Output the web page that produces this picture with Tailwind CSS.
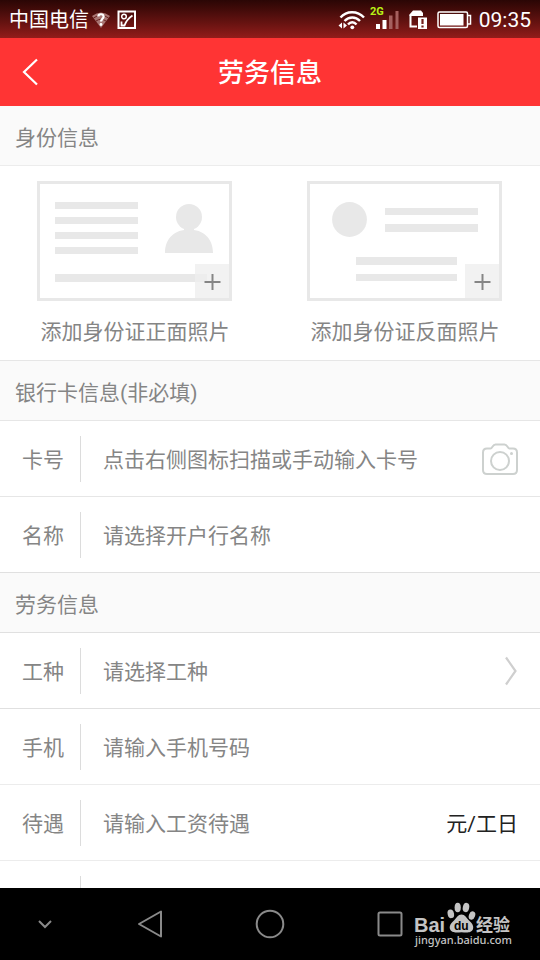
<!DOCTYPE html>
<html lang="zh-CN">
<head>
<meta charset="utf-8">
<meta name="viewport" content="width=device-width, initial-scale=1">
<title>劳务信息</title>
<script src="https://cdn.jsdelivr.net/npm/@tailwindcss/browser@4"></script>
</head>
<body class="flex h-screen flex-col overflow-hidden bg-white font-[Roboto,'Noto_Sans_CJK_SC',sans-serif] text-[21px] leading-[30px] text-[#858585]">

<!-- Status bar -->
<div class="flex h-[38px] shrink-0 items-center justify-between bg-linear-to-b from-[#2a0605] to-[#931c1a] px-[9px] pt-[2px] text-white">
  <div class="flex items-center">
    <span class="text-[20px]">中国电信</span>
    <svg class="ml-[2px]" width="20" height="18" viewBox="0 0 20 18" aria-hidden="true">
      <path d="M1 5 Q10 -2 19 5 L10 17Z" fill="#a87572"/>
      <path d="M2.500 7 Q10 1.500 17.500 7 M5 10 Q10 6.500 15 10" fill="none" stroke="#6a2220" stroke-width="1"/>
      <path d="M7.300 5.500 C7.500 2.500 12.800 2.500 12.600 5.800 C12.500 7.800 10 8 10 10.500" fill="none" stroke="#fff" stroke-width="2.200"/>
      <circle cx="10" cy="13.500" r="1.400" fill="#fff"/>
    </svg>
    <svg class="ml-[6px]" width="20" height="20" viewBox="0 0 20 20" fill="none" stroke="#fff" aria-hidden="true">
      <rect x="1.500" y="1.500" width="16.500" height="16.500" stroke-width="2"/>
      <circle cx="7" cy="6.500" r="2.300" stroke-width="1.500"/>
      <path d="M4.500 11.500 V15.500 H7.500 C9 11 11 8.500 15.500 5.500" stroke-width="1.800"/>
    </svg>
  </div>
  <div class="flex items-center">
    <svg width="28" height="22" viewBox="0 0 28 22" fill="none" stroke="#fff" stroke-width="2.400" aria-hidden="true">
      <path d="M2.500 8.500 C8.500 1.500 19.500 1.500 26 8.500 M6.500 12 C11 7.300 17.500 7.300 22 12 M10 15.500 C12.500 12.500 16 12.500 18.500 15.500"/>
      <circle cx="14.300" cy="18.300" r="1.900" fill="#fff" stroke="none"/>
      <path d="M4 13.500 V19.500 L0.500 16.500Z M5.500 13.500 V19.500 L9 16.500Z" fill="#fff" stroke="none"/>
    </svg>
    <svg class="ml-[4px]" width="30" height="28" viewBox="0 0 30 28" aria-hidden="true">
      <text x="0" y="9" font-family="Roboto" font-size="11" font-weight="700" fill="#b9f216">2G</text>
      <rect x="6" y="18" width="4" height="5" fill="#fff"/>
      <rect x="12.500" y="14" width="4" height="9" fill="#fff"/>
      <rect x="19" y="9.500" width="3.500" height="13.500" fill="#a5605e"/>
      <rect x="25.500" y="5" width="3" height="18" fill="#a5605e"/>
    </svg>
    <svg class="ml-[9px]" width="20" height="20" viewBox="0 0 20 20" aria-hidden="true">
      <path d="M1.500 5 V16.500 H8" fill="none" stroke="#fff" stroke-width="2"/>
      <path d="M0.500 4.500 L4 0.500 H12 L14 3 V6 H0.500Z" fill="#fff"/>
      <path d="M9 7.500 H18 V19 H9Z" fill="#fff"/>
      <path d="M13.500 9 V14 M13.500 15.500 V17.500" stroke="#75201d" stroke-width="2.200"/>
    </svg>
    <svg class="ml-[8px]" width="35" height="18" viewBox="0 0 35 18" aria-hidden="true">
      <rect x="1" y="1" width="29.500" height="15.500" rx="1.500" fill="none" stroke="#fff" stroke-width="1.500"/>
      <rect x="3" y="3" width="23.500" height="11.500" fill="#fff"/>
      <path d="M31 4.500 H33.500 V13 H31" fill="none" stroke="#fff" stroke-width="1.500"/>
    </svg>
    <time class="ml-[7px]">09:35</time>
  </div>
</div>

<!-- Title bar -->
<header class="grid h-[68px] shrink-0 grid-cols-[60px_1fr_60px] items-center bg-[#ff3434] text-white">
  <button type="button" class="flex h-full items-center justify-center" aria-label="返回">
    <svg width="18" height="28" viewBox="0 0 18 28" fill="none" stroke="#fff" stroke-width="2.200" aria-hidden="true"><path d="M16 1.500 L3 14 L16 26.500"/></svg>
  </button>
  <h1 class="pt-[2px] text-center text-[26px] font-medium">劳务信息</h1>
</header>

<main class="min-h-0 flex-1 overflow-hidden">
  <section>
    <h2 class="flex h-[60px] items-center border-b border-[#ececec] bg-[#fafafa] px-[15px] pt-1">身份信息</h2>
    <div class="grid grid-cols-2 border-b border-[#e6e6e6] pt-[15px] pb-[13px]">
      <button type="button" class="flex flex-col items-center gap-4">
        <svg width="196" height="120" viewBox="0 0 196 120" fill="#e8e8e8" aria-hidden="true">
          <rect x="1.500" y="1.500" width="192" height="117" fill="#fff" stroke="#e8e8e8" stroke-width="3"/>
          <path d="M18 21h83v7h-83z M18 36h83v7h-83z M18 51h83v7h-83z M18 66h83v7h-83z M18 93h140v8h-140z"/>
          <circle cx="152" cy="36" r="13"/>
          <path d="M147 46h10v4h-10z M128 72 C128 57 138 48.500 152 48.500 C166 48.500 176 57 176 72Z"/>
          <rect x="158" y="83" width="34" height="34" fill="#f2f2f2"/>
          <path d="M158 93h12v8h-12z" fill="#ededed"/>
          <path d="M167.500 101h16 M175.500 93v16" stroke="#858585" stroke-width="2"/>
        </svg>
        <span>添加身份证正面照片</span>
      </button>
      <button type="button" class="flex flex-col items-center gap-4">
        <svg width="196" height="120" viewBox="0 0 196 120" fill="#e8e8e8" aria-hidden="true">
          <rect x="1.500" y="1.500" width="192" height="117" fill="#fff" stroke="#e8e8e8" stroke-width="3"/>
          <circle cx="42.500" cy="38.500" r="17.400"/>
          <path d="M78 27h93v7h-93z M78 43h93v8h-93z M49 76h101v8h-101z M49 93h101v7h-101z"/>
          <rect x="158" y="83" width="34" height="34" fill="#f2f2f2"/>
          <path d="M167.500 101h16 M175.500 93v16" stroke="#858585" stroke-width="2"/>
        </svg>
        <span>添加身份证反面照片</span>
      </button>
    </div>
  </section>

  <section>
    <h2 class="flex h-[60px] items-center border-b border-[#e6e6e6] bg-[#fafafa] px-[15px] pt-1">银行卡信息(非必填)</h2>
    <div class="flex h-[76px] items-center border-b border-[#e6e6e6] pr-[22px]">
      <label for="card" class="w-[81px] shrink-0 border-r border-[#dcdcdc] pt-[9px] pb-[7px] pl-[22px]">卡号</label>
      <input id="card" type="text" inputmode="numeric" placeholder="点击右侧图标扫描或手动输入卡号" class="min-w-0 flex-1 pt-[2px] pl-[22px] outline-none placeholder:text-[#858585]">
      <button type="button" aria-label="扫描银行卡">
        <svg width="36" height="32" viewBox="0 0 36 32" fill="none" stroke="#cdd1cf" stroke-width="2" aria-hidden="true">
          <path d="M5 5.500 H8.500 C10.500 5.500 10.500 1.500 13.500 1.500 H22.500 C25.500 1.500 25.500 5.500 27.500 5.500 H31 Q35 5.500 35 9.500 V27 Q35 31 31 31 H5 Q1 31 1 27 V9.500 Q1 5.500 5 5.500Z"/>
          <circle cx="18" cy="18" r="9"/>
          <circle cx="29.500" cy="10.500" r="1.500" fill="#cdd1cf" stroke="none"/>
        </svg>
      </button>
    </div>
    <div class="flex h-[76px] items-center border-b border-[#e0e0e0] pr-[22px]">
      <label for="bank" class="w-[81px] shrink-0 border-r border-[#dcdcdc] pt-[9px] pb-[7px] pl-[22px]">名称</label>
      <button id="bank" type="button" class="flex-1 pt-[2px] pl-[22px] text-left">请选择开户行名称</button>
    </div>
  </section>

  <section>
    <h2 class="flex h-[60px] items-center border-b border-[#e0e0e0] bg-[#fafafa] px-[15px] pt-1">劳务信息</h2>
    <div class="flex h-[76px] items-center border-b border-[#e0e0e0] pr-[22px]">
      <label for="job" class="w-[81px] shrink-0 border-r border-[#dcdcdc] pt-[9px] pb-[7px] pl-[22px]">工种</label>
      <button id="job" type="button" class="flex flex-1 items-center justify-between pl-[22px] text-left">
        <span class="pt-[2px]">请选择工种</span>
        <svg width="14" height="30" viewBox="0 0 14 30" fill="none" stroke="#cfcfcf" stroke-width="2.200" aria-hidden="true"><path d="M2 1.500 L11.500 15 L2 28.500"/></svg>
      </button>
    </div>
    <div class="flex h-[76px] items-center border-b border-[#ececec] pr-[22px]">
      <label for="phone" class="w-[81px] shrink-0 border-r border-[#dcdcdc] pt-[9px] pb-[7px] pl-[22px]">手机</label>
      <input id="phone" type="tel" placeholder="请输入手机号码" class="min-w-0 flex-1 pt-[2px] pl-[22px] outline-none placeholder:text-[#858585]">
    </div>
    <div class="flex h-[76px] items-center border-b border-[#ececec] pr-[22px]">
      <label for="wage" class="w-[81px] shrink-0 border-r border-[#dcdcdc] pt-[9px] pb-[7px] pl-[22px]">待遇</label>
      <input id="wage" type="text" placeholder="请输入工资待遇" class="min-w-0 flex-1 pt-[2px] pl-[22px] outline-none placeholder:text-[#858585]">
      <span class="pt-[2px] text-[#222]">元/工日</span>
    </div>
    <div class="flex h-[76px] items-center pr-[22px]">
      <span class="h-[46px] w-[81px] shrink-0 border-r border-[#dcdcdc]"></span>
    </div>
  </section>
</main>

<!-- System navigation -->
<nav class="relative grid h-[72px] shrink-0 grid-cols-[3fr_4fr_4fr_4fr_3fr] bg-black">
  <button type="button" class="flex items-center justify-center" aria-label="收起">
    <svg width="16" height="10" viewBox="0 0 16 10" fill="none" stroke="#8a8a8a" stroke-width="2" aria-hidden="true"><path d="M2 2 L8 8 L14 2"/></svg>
  </button>
  <button type="button" class="flex items-center justify-center" aria-label="后退">
    <svg width="28" height="30" viewBox="0 0 28 30" fill="none" stroke="#8a8a8a" stroke-width="2" stroke-linejoin="round" aria-hidden="true"><path d="M25 2.500 V27.500 L3 15Z"/></svg>
  </button>
  <button type="button" class="flex items-center justify-center" aria-label="主屏幕">
    <svg width="30" height="30" viewBox="0 0 30 30" fill="none" stroke="#8a8a8a" stroke-width="2" aria-hidden="true"><circle cx="15" cy="15" r="13.300"/></svg>
  </button>
  <button type="button" class="flex items-center justify-center" aria-label="最近任务">
    <svg width="26" height="26" viewBox="0 0 26 26" fill="none" stroke="#8a8a8a" stroke-width="2" aria-hidden="true"><rect x="1.500" y="1.500" width="23" height="23" rx="1.500"/></svg>
  </button>
  <!-- Baidu Jingyan mark -->
  <svg class="absolute right-[27px] bottom-3" width="100" height="48" viewBox="0 0 100 48" fill="#c4c4c4">
    <text x="1" y="31.500" font-family="Liberation Sans" font-size="20" font-weight="700">Bai</text>
    <ellipse cx="37.800" cy="13.800" rx="3.200" ry="4.400" transform="rotate(-12 37.800 13.800)"/>
    <ellipse cx="44.700" cy="7.500" rx="3.100" ry="4.700"/>
    <ellipse cx="53" cy="7.500" rx="3.200" ry="4.700" transform="rotate(12 53 7.500)"/>
    <ellipse cx="59" cy="15.500" rx="3.100" ry="4.300" transform="rotate(20 59 15.500)"/>
    <path d="M48.500 14.500 C52 14.500 53.500 18 56 20.500 C59 23 61 26 60 29 C58.500 33.500 53 32.500 48.500 32.200 C44 32.500 38.500 33.500 37 29 C36 26 38 23 41 20.500 C43.500 18 45 14.500 48.500 14.500Z"/>
    <text x="41" y="30" font-family="Liberation Sans" font-size="12" font-weight="700" fill="#000">du</text>
    <text x="63" y="31" font-family="Noto Sans CJK SC" font-size="17" font-weight="700">经验</text>
    <text x="2" y="44" font-family="Noto Sans" font-size="11" font-weight="500">jingyan.baidu.com</text>
  </svg>
</nav>
</body>
</html>
